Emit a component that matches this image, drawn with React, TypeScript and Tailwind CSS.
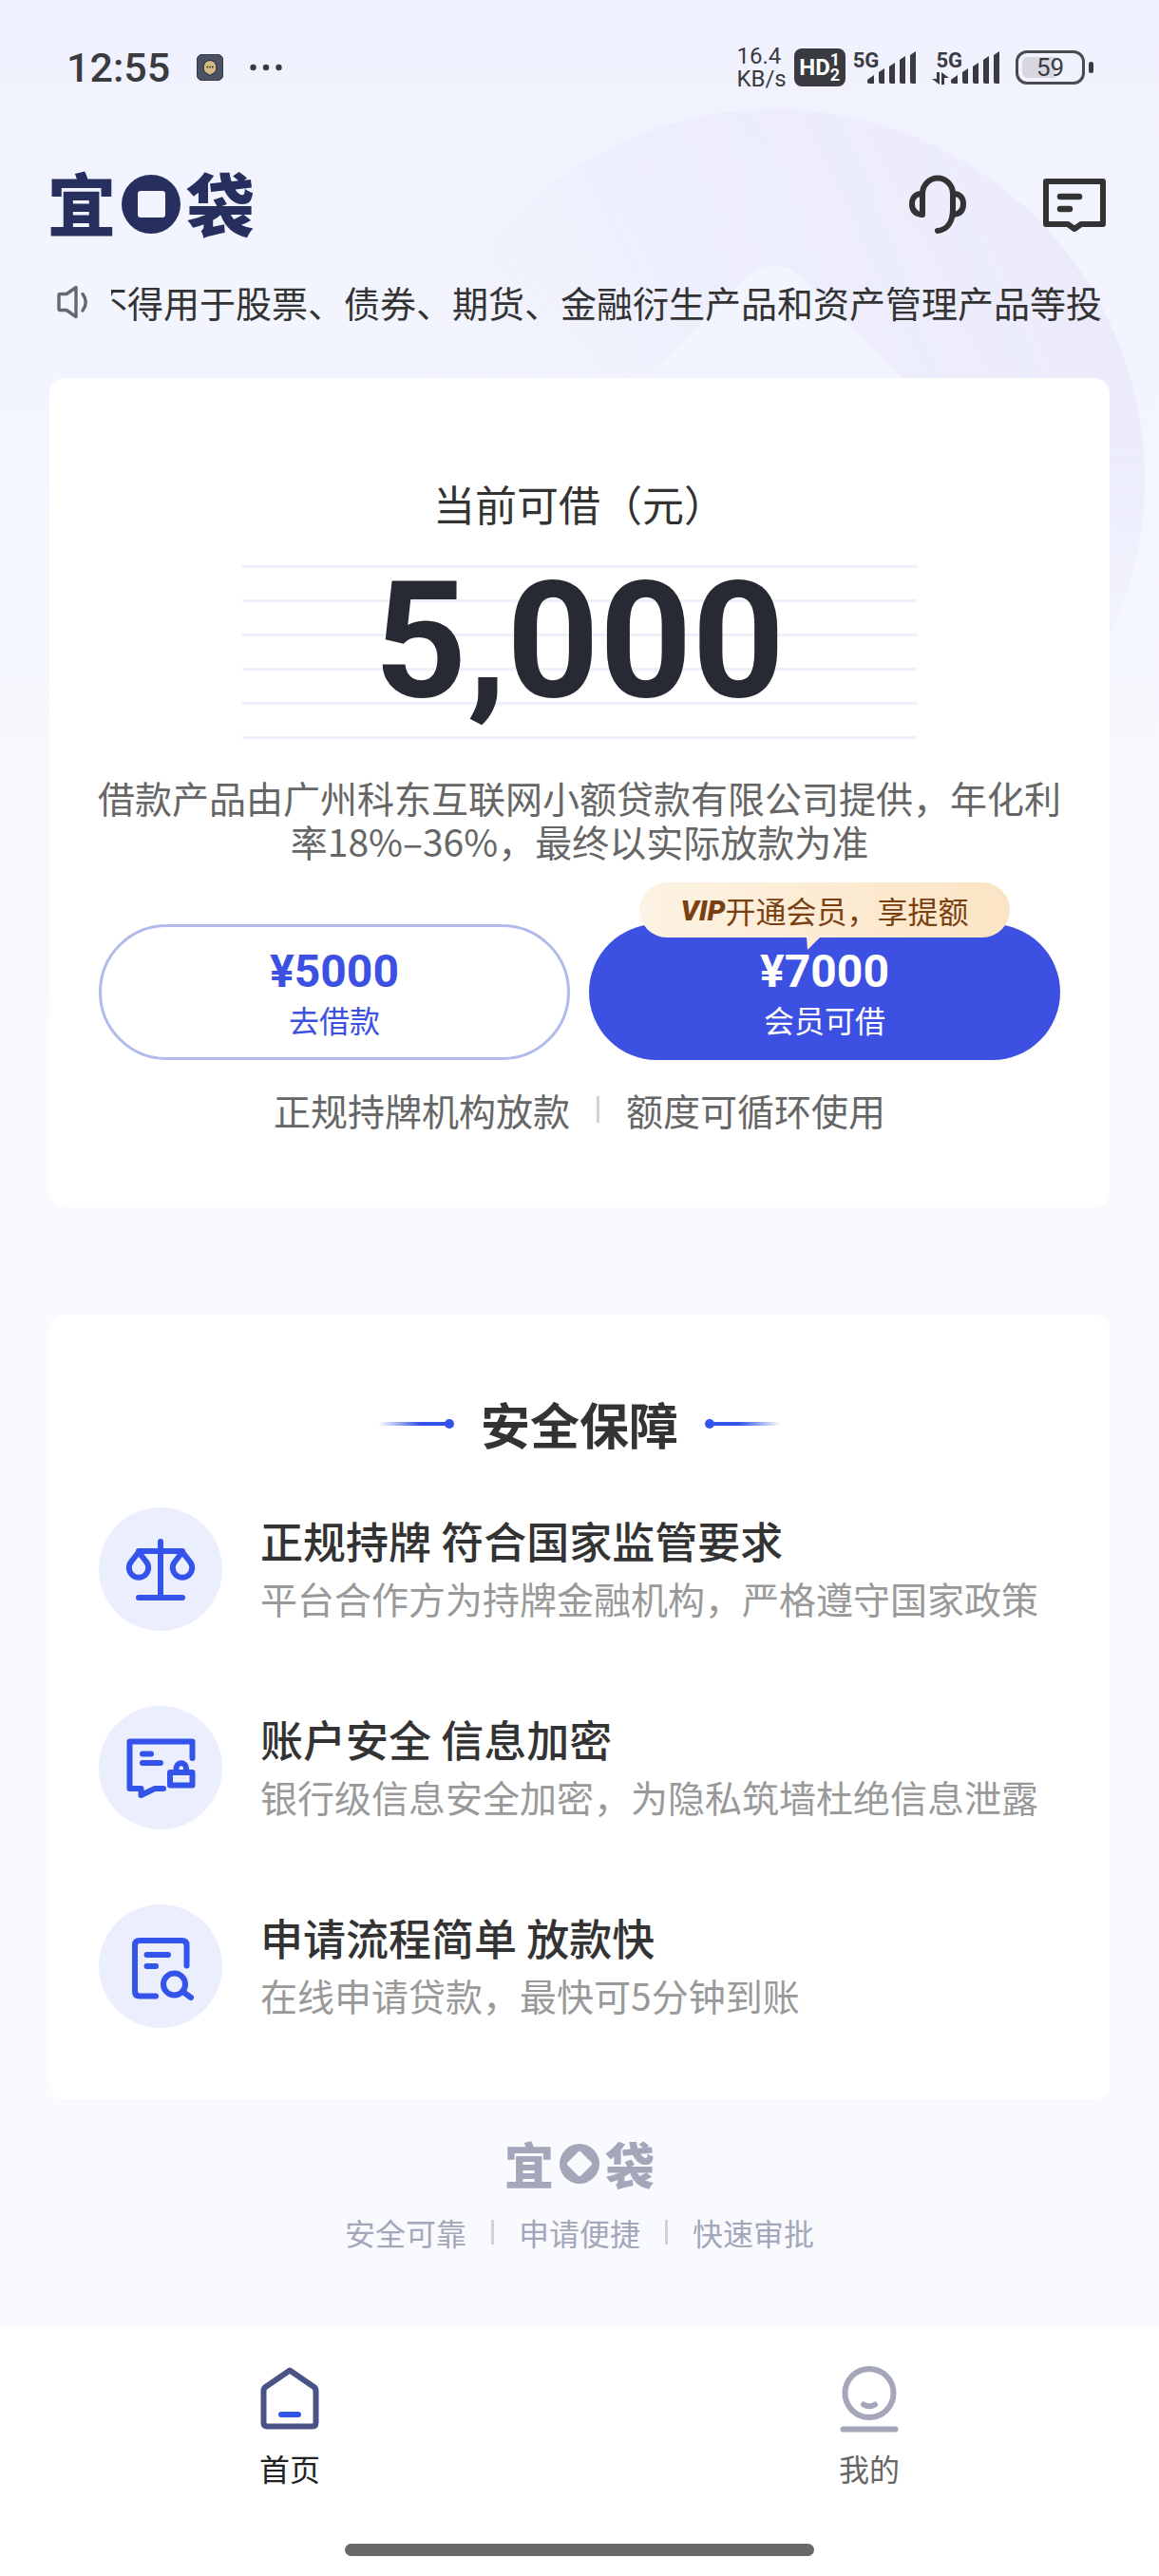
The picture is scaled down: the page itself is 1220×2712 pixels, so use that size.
import { ReactNode } from "react";
import clsx from "clsx";

const features = [
  {
    title: "正规持牌 符合国家监管要求",
    desc: "平台合作方为持牌金融机构，严格遵守国家政策",
    icon: <ScaleIcon />,
  },
  {
    title: "账户安全 信息加密",
    desc: "银行级信息安全加密，为隐私筑墙杜绝信息泄露",
    icon: <LockMessageIcon />,
  },
  {
    title: "申请流程简单 放款快",
    desc: "在线申请贷款，最快可5分钟到账",
    icon: <SearchDocIcon />,
  },
];

const slogans = ["安全可靠", "申请便捷", "快速审批"];

function FeatureSvg({ children }: { children: ReactNode }) {
  return (
    <svg
      viewBox="0 0 130 130"
      className="size-full"
      fill="none"
      stroke="#3453ea"
      strokeWidth="6"
      strokeLinecap="round"
      strokeLinejoin="round"
      aria-hidden="true"
    >
      {children}
    </svg>
  );
}

function ScaleIcon() {
  return (
    <FeatureSvg>
      <path d="M65 36V95M42 95H88M42 46H88" />
      <path d="M42 47L33.8 57.5A10.2 10.2 0 1 0 50.2 57.5Z" />
      <path d="M88 47L79.8 57.5A10.2 10.2 0 1 0 96.2 57.5Z" />
    </FeatureSvg>
  );
}

function LockMessageIcon() {
  return (
    <FeatureSvg>
      <path d="M98.5 55V37.5H32.5V87H44.5V94L59 87H68" />
      <path d="M46 50.5H55M46 60H65" />
      <rect x="75" y="70" width="23.5" height="13.5" />
      <path d="M81.5 69V65.5A5.2 5.2 0 0 1 92 65.5V69" />
    </FeatureSvg>
  );
}

function SearchDocIcon() {
  return (
    <FeatureSvg>
      <path d="M92.5 64.5V43Q92.5 38 87.5 38H43Q38 38 38 43V91.5Q38 96.5 43 96.5H60" />
      <path d="M50.5 53H73M50.5 65H60" />
      <circle cx="79.5" cy="84" r="11.5" />
      <path d="M88 91.5L97 98" />
    </FeatureSvg>
  );
}

function SignalBars() {
  return (
    <svg viewBox="0 0 52 34" className="h-[34px] w-[52px]" fill="#3a3b40" aria-hidden="true">
      <path d="M0 30L7 25V34H2Q0 34 0 32Z" />
      <path d="M12 22L18 18V34H14Q12 34 12 32Z" />
      <path d="M23 16L29 12V34H25Q23 34 23 32Z" />
      <path d="M34 9L40 5V34H36Q34 34 34 32Z" />
      <path d="M45 4L51 0V34H47Q45 34 45 32Z" />
    </svg>
  );
}

function StatusBar() {
  return (
    <div className="flex items-center justify-between py-12 pr-[69px] pl-[70px] text-[#3a3b40] [font-family:Roboto,'Noto_Sans_CJK_SC',sans-serif]">
      <div className="flex h-[46px] items-center">
        <span className="text-[43px] leading-none font-medium">12:55</span>
        <svg viewBox="0 0 28 28" className="ml-7 size-7" aria-hidden="true">
          <rect width="28" height="28" rx="7" fill="#4a5263" stroke="#1c2230" />
          <path d="M14 6.5A7.5 7.5 0 0 1 16.5 20.8L14 22.5L11.5 20.8A7.5 7.5 0 0 1 14 6.5Z" fill="#d3b982" stroke="#1c2230" />
          <path d="M10.5 13.5h1.6M13.2 13.5h1.6M16 13.5h1.6" stroke="#222" strokeWidth="1.6" />
        </svg>
        <svg viewBox="0 0 34 8" className="ml-7 h-2 w-[34px]" fill="#3a3b40" aria-hidden="true">
          <circle cx="3.5" cy="4" r="3.2" />
          <circle cx="17" cy="4" r="3.2" />
          <circle cx="30.5" cy="4" r="3.2" />
        </svg>
      </div>

      <div className="flex h-[46px] items-center">
        <div className="text-2xl leading-6">
          <div>16.4</div>
          <div>KB/s</div>
        </div>
        <div className="ml-2 flex h-10 w-[54px] items-center justify-center rounded-lg bg-[#3a3b40] font-bold text-white">
          <span className="text-2xl">HD</span>
          <span className="text-lg leading-4">
            1<br />2
          </span>
        </div>
        <div className="ml-2 flex items-center">
          <span className="-mr-3 self-start text-[22px] leading-5 font-bold">5G</span>
          <SignalBars />
        </div>
        <div className="ml-5 flex items-center">
          <span className="relative -mr-3 self-start text-[22px] leading-5 font-bold">
            5G
            <svg viewBox="0 0 18 13" className="absolute top-[22px] -left-1 h-[13px] w-[18px]" fill="#3a3b40" aria-hidden="true">
              <path d="M5 0H8V13L0 7H5ZM10 13V0L18 6H13V13Z" />
            </svg>
          </span>
          <SignalBars />
        </div>
        <div className="ml-4 flex items-center gap-1">
          <div className="flex h-9 w-[73px] items-center rounded-xl border-[3px] border-[#4a4b50] p-1">
            <div className="flex h-full w-full items-center justify-center rounded-md bg-linear-to-r from-[#d6d7e0] from-59% to-transparent to-59% text-[26px]">
              59
            </div>
          </div>
          <div className="h-3 w-[5px] rounded-sm bg-[#3a3b40]" />
        </div>
      </div>
    </div>
  );
}

function Header() {
  return (
    <header className="flex items-center justify-between pt-[34px] pr-14 pl-[50px]">
      <h1 className="flex h-[78px] items-center gap-1.5 text-[72px] leading-[72px] font-black text-[#272f5e]">
        <span className="pb-1.5">宜</span>
        <svg viewBox="0 0 62 62" className="size-[62px]" role="img" aria-label="口">
          <path fill="currentColor" fillRule="evenodd" d="M31 0A31 31 0 1 1 31 62A31 31 0 1 1 31 0ZM20 17Q17 17 17 20V42Q17 45 20 45H43Q46 45 46 42V20Q46 17 43 17Z" />
        </svg>
        <span className="pb-1.5">袋</span>
      </h1>
      <div className="flex items-center gap-20 text-[#333]">
        <button type="button" aria-label="客服" className="cursor-pointer">
          <svg viewBox="0 0 62 62" className="size-[62px]" fill="none" stroke="currentColor" strokeWidth="6" strokeLinecap="round" strokeLinejoin="round">
            <path d="M15 42V20A16 16.5 0 0 1 47 20V36C47 50 41 58 31 59" />
            <path d="M14 20C7 20 4 25 4 31S7 41 14 42" />
            <path d="M48 20C55 20 58 25 58 31S55 41 48 42" />
          </svg>
        </button>
        <button type="button" aria-label="消息" className="cursor-pointer">
          <svg viewBox="0 0 66 58" className="h-[58px] w-[66px]" fill="none" stroke="currentColor" strokeWidth="6" strokeLinecap="round" strokeLinejoin="round">
            <path d="M3 5H63V50H40L33 55L26 50H3Z" />
            <path d="M18 21H38M18 34H28" strokeWidth="6.5" />
          </svg>
        </button>
      </div>
    </header>
  );
}

function Notice() {
  return (
    <div className="mt-[38px] flex items-center pr-[60px] pl-[58px]">
      <svg viewBox="0 0 37 36" className="mr-[22px] h-9 w-[37px] shrink-0" fill="none" stroke="#66676d" strokeWidth="3.4" strokeLinecap="round" strokeLinejoin="round" aria-hidden="true">
        <path d="M4 11Q4 9.5 5.5 9.5H12L22 2.5V33.5L12 26.5H5.5Q4 26.5 4 25Z" />
        <path d="M29 9.5Q35.5 18 29 27" />
      </svg>
      <div className="flex flex-1 justify-end overflow-hidden">
        <p className="text-[38px] leading-[52px] whitespace-nowrap text-[#333]">
          不得用于股票、债券、期货、金融衍生产品和资产管理产品等投
        </p>
      </div>
    </div>
  );
}

function LoanCard() {
  return (
    <section className="mx-[52px] mt-[54px] rounded-2xl bg-white px-[52px] pt-[102px] pb-[77px] text-center">
      <h2 className="text-[44px] leading-[60px] text-[#333]">当前可借（元）</h2>
      <div className="mx-auto mt-[35px] flex h-[183px] w-[710px] max-w-full items-center justify-center bg-[repeating-linear-gradient(#eff0fa_0_3px,transparent_3px_36px)]">
        <span className="pb-6 text-[170px] leading-none font-bold text-[#272933] [font-family:Roboto,sans-serif]">
          5,000
        </span>
      </div>
      <p className="-mx-1 mt-[38px] text-[39px] leading-[46px] text-[#666]">
        借款产品由广州科东互联网小额贷款有限公司提供，年化利率18%–36%，最终以实际放款为准
      </p>

      <div className="mt-[65px] grid grid-cols-2 gap-5">
        <button
          type="button"
          className="flex h-[143px] cursor-pointer flex-col items-center justify-center rounded-full border-[3px] border-[#b0bbec] pt-1 text-[#3c51e1]"
        >
          <span className="text-5xl leading-[52px] font-bold [font-family:Roboto,sans-serif]">¥5000</span>
          <span className="text-[32px] leading-[48px]">去借款</span>
        </button>
        <button
          type="button"
          className="relative flex h-[143px] cursor-pointer flex-col items-center justify-center rounded-full bg-[#3c51e1] pt-1 text-white"
        >
          <span className="absolute -top-11 left-1/2 flex h-[58px] w-[390px] -translate-x-1/2 items-center justify-center rounded-full bg-linear-to-r from-[#fdf3e4] to-[#fbe4c4] text-[32px] whitespace-nowrap text-[#7b4012]">
            <b className="text-[30px] font-black italic [font-family:Roboto,sans-serif]">VIP</b>
            开通会员，享提额
            <svg viewBox="0 0 14 13" className="absolute top-full left-[176px] h-[13px] w-3.5" aria-hidden="true">
              <path d="M0 0H14L1 13Z" fill="#fcecd4" />
            </svg>
          </span>
          <span className="text-5xl leading-[52px] font-bold [font-family:Roboto,sans-serif]">¥7000</span>
          <span className="text-[32px] leading-[48px]">会员可借</span>
        </button>
      </div>

      <div className="mt-[26px] flex items-center justify-center gap-7 text-[39px] leading-[52px] text-[#666]">
        <span>正规持牌机构放款</span>
        <span className="h-7 w-[3px] bg-[#d4d4d8]" />
        <span>额度可循环使用</span>
      </div>
    </section>
  );
}

function TitleLine({ flip }: { flip?: boolean }) {
  return (
    <span className={clsx("flex items-center", flip && "flex-row-reverse")}>
      <span
        className={clsx(
          "h-1 w-[74px] from-transparent to-[#3453ea] to-60%",
          flip ? "bg-linear-to-l" : "bg-linear-to-r"
        )}
      />
      <span className={clsx("size-2.5 rounded-full bg-[#3453ea]", flip ? "-mr-1" : "-ml-1")} />
    </span>
  );
}

function SafetyCard() {
  return (
    <section className="mx-[52px] mt-[113px] rounded-2xl bg-white px-[52px] pt-[85px] pb-[75px]">
      <div className="flex items-center justify-center gap-7">
        <TitleLine />
        <h2 className="text-[52px] leading-[60px] font-bold text-[#333]">安全保障</h2>
        <TitleLine flip />
      </div>
      <ul className="mt-[58px] flex flex-col gap-[79px]">
        {features.map((item) => (
          <li key={item.title} className="flex items-center gap-10">
            <div className="size-[130px] shrink-0 rounded-full bg-[#ebeefc]">{item.icon}</div>
            <div>
              <h3 className="text-[45px] leading-[60px] font-medium text-[#333]">{item.title}</h3>
              <p className="text-[39px] leading-[60px] text-[#999]">{item.desc}</p>
            </div>
          </li>
        ))}
      </ul>
    </section>
  );
}

function Footer() {
  return (
    <footer className="mt-10 flex flex-1 flex-col items-center pb-14 text-[#a4a6ba]">
      <div className="flex h-14 items-center gap-1.5 text-[52px] leading-[56px] font-black">
        宜
        <svg viewBox="0 0 42 42" className="size-[42px]" role="img" aria-label="口">
          <path fill="currentColor" fillRule="evenodd" d="M21 0A21 21 0 1 1 21 42A21 21 0 1 1 21 0ZM19.5 8.5L8.5 19.5Q7 21 8.5 22.5L19.5 33.5Q21 35 22.5 33.5L33.5 22.5Q35 21 33.5 19.5L22.5 8.5Q21 7 19.5 8.5Z" />
        </svg>
        袋
      </div>
      <ul className="mt-6 flex items-center text-[32px] leading-10">
        {slogans.map((text, i) => (
          <li key={text} className="flex items-center">
            {i > 0 && <span className="mx-[26px] h-[26px] w-[3px] bg-[#d0d1dc]" />}
            {text}
          </li>
        ))}
      </ul>
    </footer>
  );
}

function TabBar() {
  return (
    <nav className="bg-white pt-[39px] pb-[21px]">
      <div className="grid grid-cols-2">
        <a href="#home" aria-current="page" className="flex flex-col items-center text-[32px] leading-10 text-[#222]">
          <svg viewBox="0 0 62 70" className="h-[70px] w-[62px]" fill="none" strokeWidth="6" strokeLinecap="round" strokeLinejoin="round" aria-hidden="true">
            <path d="M31 4.5L56.5 22Q58.5 23.5 58.5 26V59.5Q58.5 63.5 54.5 63.5H7.5Q3.5 63.5 3.5 59.5V26Q3.5 23.5 5.5 22Z" stroke="#4a5385" />
            <path d="M22 51H40" stroke="#3453ea" />
          </svg>
          <span className="mt-[17px]">首页</span>
        </a>
        <a href="#mine" className="flex flex-col items-center text-[32px] leading-10 text-[#666]">
          <svg viewBox="0 0 62 70" className="h-[70px] w-[62px]" fill="none" stroke="#a4a6ba" strokeWidth="6" strokeLinecap="round" aria-hidden="true">
            <circle cx="31" cy="28.5" r="25.5" />
            <path d="M25 40.5Q31 44 37 40.5" />
            <path d="M3.5 66.5H58.5" />
          </svg>
          <span className="mt-[17px]">我的</span>
        </a>
      </div>
      <div className="mx-auto mt-[60px] h-[13px] w-[494px] max-w-full rounded-full bg-[#696969]" />
    </nav>
  );
}

export default function App() {
  return (
    <div className="relative isolate flex min-h-screen flex-col overflow-hidden bg-[#f9fafe] bg-linear-to-b from-[#f0f1fe] via-[#f2f4fe] via-10% to-[#f9fafe] to-40% [font-family:'Noto_Sans_CJK_SC',sans-serif]">
      {/* coin watermark behind the header */}
      <svg viewBox="0 0 780 780" className="absolute top-[115px] right-[15px] -z-10 size-[780px]" aria-hidden="true">
        <defs>
          <linearGradient id="coin" x1="0.9" y1="0.2" x2="0.1" y2="0.6">
            <stop offset="0" stopColor="#ebebfb" />
            <stop offset="0.5" stopColor="#ebebfb" stopOpacity="0.7" />
            <stop offset="1" stopColor="#f0f2fe" stopOpacity="0" />
          </linearGradient>
          <linearGradient id="coinFade" x1="0" y1="0" x2="0" y2="1">
            <stop offset="0.45" stopColor="#fff" />
            <stop offset="0.8" stopColor="#000" />
          </linearGradient>
          <mask id="coinMask">
            <rect width="780" height="780" fill="url(#coinFade)" />
          </mask>
        </defs>
        <path
          mask="url(#coinMask)"
          fill="url(#coin)"
          fillRule="evenodd"
          d="M390 0A390 390 0 1 1 390 780A390 390 0 1 1 390 0ZM358 180L180 358Q148 390 180 422L358 600Q390 632 422 600L600 422Q632 390 600 358L422 180Q390 148 358 180Z"
        />
      </svg>
      <StatusBar />
      <Header />
      <Notice />
      <LoanCard />
      <SafetyCard />
      <Footer />
      <TabBar />
    </div>
  );
}
